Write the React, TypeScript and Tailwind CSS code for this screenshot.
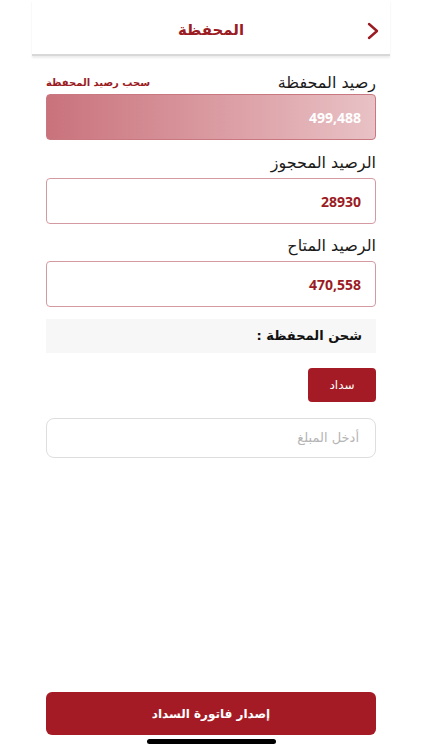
import React from "react";

const font = { fontFamily: '"DejaVu Sans", "Noto Sans", sans-serif' };
const numFont = { fontFamily: '"Open Sans", "DejaVu Sans", sans-serif' };

const Field = ({ label, value }: { label: string; value: string }) => (
  <div className="flex flex-col">
    <div className="pt-[14px] h-[38px] leading-[18px] text-[16px] text-[#1a1a1a]">{label}</div>
    <div
      style={numFont}
      className="h-[46px] border border-[#d49aa2] rounded-[4px] flex items-center px-[14px] text-[14px] font-bold text-[#9b1b23]"
    >
      {value}
    </div>
  </div>
);

export default function App() {
  return (
    <div dir="rtl" style={font} className="w-[422px] h-[750px] bg-white flex flex-col relative overflow-hidden">
      <div className="mx-[32px] h-[56px] border-b-[2px] border-[#d8d8d8] shadow-[0_2px_2px_rgba(0,0,0,0.08)] flex items-center relative">
        <svg className="absolute right-[11px] top-[22px]" width="12" height="18" viewBox="0 0 12 18" fill="none">
          <path d="M2 2 L10 9 L2 16" stroke="#9b1b23" strokeWidth="2.4" strokeLinecap="round" strokeLinejoin="round" />
        </svg>
        <div className="flex-1 text-center text-[15px] font-bold text-[#9b1b23] pt-[6px]">المحفظة</div>
      </div>

      <div className="mx-[46px] flex flex-col">
        <div className="pt-[15px] h-[38px] leading-[18px] flex items-center justify-between">
          <span className="text-[16px] text-[#1a1a1a]">رصيد المحفظة</span>
          <span className="text-[10px] font-bold text-[#9b1b23]">سحب رصيد المحفظة</span>
        </div>
        <div
          style={numFont}
          className="h-[46px] rounded-[4px] border border-[#c97882] bg-gradient-to-l from-[#e8c2c6] to-[#c9727c] flex items-center px-[14px] text-[14px] font-bold text-white"
        >
          499,488
        </div>

        <Field label="الرصيد المحجوز" value="28930" />
        <div className="-mt-[1px]">
          <Field label="الرصيد المتاح" value="470,558" />
        </div>

        <div className="mt-[12px] h-[34px] bg-[#f7f7f7] flex items-center px-[14px] text-[13px] font-bold text-[#111]">
          شحن المحفظة :
        </div>

        <div className="mt-[15px] flex">
          <button className="w-[68px] h-[34px] bg-[#a51b25] rounded-[4px] text-white text-[12px]">سداد</button>
        </div>

        <div className="mt-[16px] h-[40px] border border-[#dedede] rounded-[8px] flex items-center px-[16px] text-[13px] text-[#b5b5b5]">
          أدخل المبلغ
        </div>
      </div>

      <div className="flex-1" />

      <div className="mx-[46px] mb-[15px] h-[43px] bg-[#a51b25] rounded-[6px] flex items-center justify-center text-white text-[12px] font-bold">
        إصدار فاتورة السداد
      </div>
      <div className="absolute left-[147px] bottom-[6px] w-[129px] h-[5px] rounded-full bg-black" />
    </div>
  );
}
